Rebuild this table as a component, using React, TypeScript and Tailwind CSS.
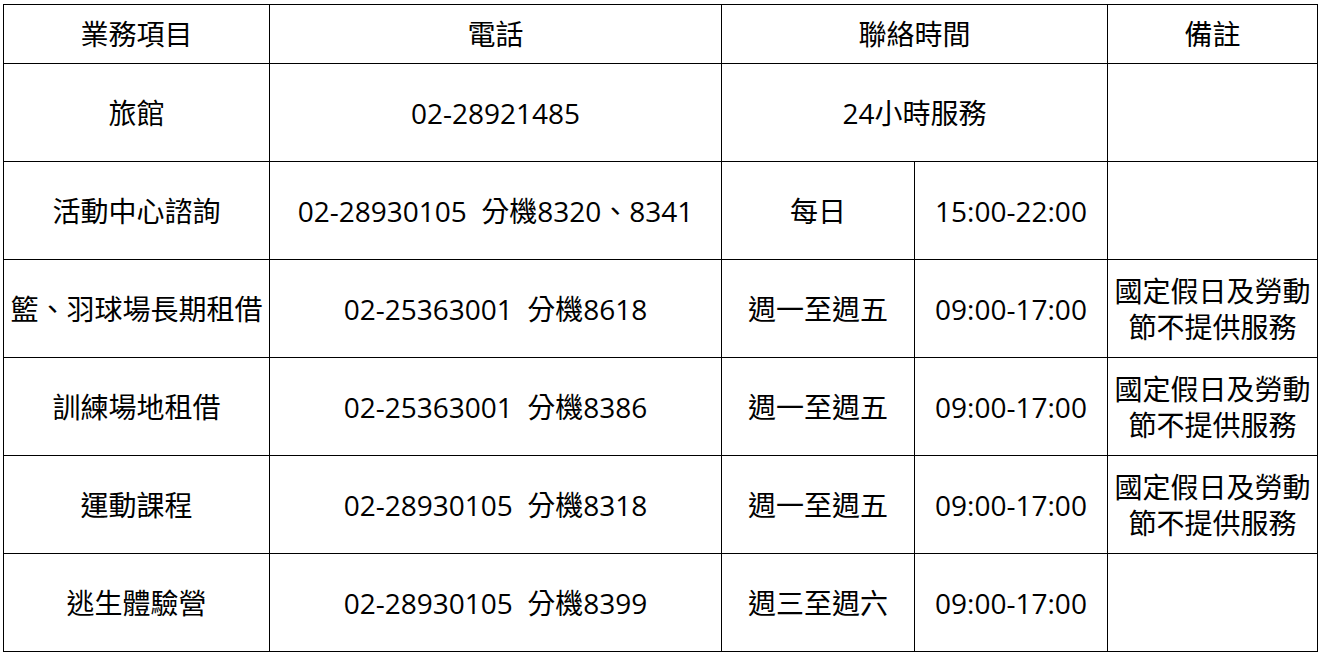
const rows = [
  { item: "活動中心諮詢", phone: "02-28930105  分機8320、8341", day: "每日", time: "15:00-22:00", note: false },
  { item: "籃、羽球場長期租借", phone: "02-25363001  分機8618", day: "週一至週五", time: "09:00-17:00", note: true },
  { item: "訓練場地租借", phone: "02-25363001  分機8386", day: "週一至週五", time: "09:00-17:00", note: true },
  { item: "運動課程", phone: "02-28930105  分機8318", day: "週一至週五", time: "09:00-17:00", note: true },
  { item: "逃生體驗營", phone: "02-28930105  分機8399", day: "週三至週六", time: "09:00-17:00", note: false },
];

const cell = "border border-black text-center align-middle p-0";

export default function App() {
  return (
    <div
      className="min-h-screen bg-white pl-[3px] pt-[4px] text-black text-[28px] leading-[36px]"
      style={{ fontFamily: '"Open Sans", "Noto Sans CJK TC", sans-serif' }}
    >
      <table className="border-collapse table-fixed w-[1314px]">
        <colgroup>
          <col className="w-[266px]" />
          <col className="w-[452px]" />
          <col className="w-[193px]" />
          <col className="w-[193px]" />
          <col className="w-[210px]" />
        </colgroup>
        <thead>
          <tr className="h-[59px]">
            <th className={`${cell} font-normal`}>業務項目</th>
            <th className={`${cell} font-normal`}>電話</th>
            <th className={`${cell} font-normal`} colSpan={2}>聯絡時間</th>
            <th className={`${cell} font-normal`}>備註</th>
          </tr>
        </thead>
        <tbody>
          <tr className="h-[98px]">
            <td className={cell}>旅館</td>
            <td className={cell}>02-28921485</td>
            <td className={cell} colSpan={2}>24小時服務</td>
            <td className={cell}></td>
          </tr>
          {rows.map((r) => (
            <tr key={r.item} className="h-[98px]">
              <td className={`${cell} whitespace-nowrap`}>{r.item}</td>
              <td className={`${cell} whitespace-pre`}>{r.phone}</td>
              <td className={cell}>{r.day}</td>
              <td className={cell}>{r.time}</td>
              <td className={cell}>
                {r.note && (
                  <>
                    國定假日及勞動
                    <br />
                    節不提供服務
                  </>
                )}
              </td>
            </tr>
          ))}
        </tbody>
      </table>
    </div>
  );
}
